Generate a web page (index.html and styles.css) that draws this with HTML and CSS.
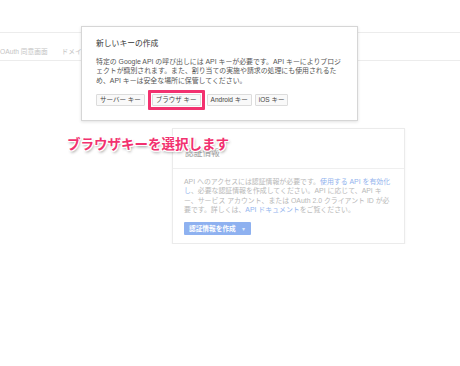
FILE: index.html
```html
<!DOCTYPE html>
<html lang="ja">
<head>
  <meta charset="UTF-8"/>
  <meta name="viewport" content="width=device-width, initial-scale=1"/>
  <title>認証情報</title>
  <link rel="stylesheet" href="styles.css">
</head>
<body>
  <!-- Tabs -->
  <div class="tabs">
    <span class="tab">OAuth 同意画面</span>
    <span class="tab">ドメイン確認</span>
  </div>

  <!-- Credentials card -->
  <div class="card">
    <div class="card-head">認証情報</div>
    <div class="card-body">
      <p>API へのアクセスには認証情報が必要です。<a href="#">使用する API を有効化し</a>、必要な認証情報を作成してください。API に応じて、API キー、サービス アカウント、または OAuth 2.0 クライアント ID が必要です。詳しくは、<a href="#">API ドキュメント</a>をご覧ください。</p>
      <button class="create-btn">認証情報を作成 <span class="caret">▾</span></button>
    </div>
  </div>

  <!-- New key dialog -->
  <div class="dialog">
    <h2>新しいキーの作成</h2>
    <p>特定の Google API の呼び出しには API キーが必要です。API キーによりプロジェクトが識別されます。また、割り当ての実施や請求の処理にも使用されるため、API キーは安全な場所に保管してください。</p>
    <div class="key-btns">
      <button class="key-btn">サーバー キー</button>
      <span class="highlight"><button class="key-btn">ブラウザ キー</button></span>
      <button class="key-btn">Android キー</button>
      <button class="key-btn">iOS キー</button>
    </div>
  </div>

  <div class="note">ブラウザキーを選択します</div>
</body>
</html>
```

FILE: styles.css
```css
body{
  margin: 0;
  font-family: 'Liberation Sans', 'Noto Sans CJK JP', sans-serif;
  background: #fff;
  color: #333;
}
.tabs{
  margin-top: 32px;
  height: 29px;
  box-sizing: border-box;
  border-top: 1px solid #ececec;
  border-bottom: 1px solid #ececec;
  display: flex;
  align-items: center;
  padding-top: 8px;
}
.tab{
  font-size: 6.7px;
  color: #c4c4c4;
  margin-right: 14px;
}
.card{
  margin: 67px 0 0 172px;
  width: 233px;
  border: 1px solid #ebebeb;
  box-shadow: 0 1px 2px rgba(0, 0, 0, 0.06);
  box-sizing: border-box;
}
.card-head{
  font-size: 8.7px;
  line-height: 10px;
  color: #a0a0a0;
  padding: 19px 12px 10px;
  border-bottom: 1px solid #efefef;
}
.card-body{
  padding: 8px 10px 8px 11px;
}
.card-body p{
  margin: 0;
  font-size: 6.9px;
  line-height: 9.4px;
  color: #b8b8b8;
}
.card-body a{
  color: #93b4ee;
  text-decoration: none;
}
.create-btn{
  margin-top: 7px;
  height: 13px;
  width: 67px;
  padding: 0 0 0 5px;
  border: none;
  border-radius: 1px;
  background: #8eb1f0;
  color: #fff;
  font-family: inherit;
  font-size: 6.7px;
  font-weight: bold;
  text-align: left;
  display: flex;
  align-items: center;
}
.caret{
  margin-left: 6px;
  font-size: 6px;
  font-weight: normal;
  color: #dfe9fb;
}
.dialog{
  position: absolute;
  left: 81px;
  top: 26px;
  width: 277px;
  height: 95px;
  box-sizing: border-box;
  background: #fff;
  border: 1px solid #d6d6d6;
  box-shadow: 0 1px 3px rgba(0, 0, 0, 0.12);
  padding: 12px 14px 0 14px;
}
.dialog h2{
  margin: 0;
  font-size: 7.8px;
  line-height: 10px;
  font-weight: normal;
  color: #333;
}
.dialog p{
  margin: 8px 0 0;
  font-size: 6.9px;
  line-height: 9.3px;
  color: #555;
}
.key-btns{
  display: flex;
  align-items: center;
  gap: 3px;
  margin-top: 5px;
}
.key-btns .highlight + .key-btn{
  margin-left: -1px;
}
.key-btn{
  height: 12px;
  padding: 0 3px;
  border: 1px solid #dcdcdc;
  border-radius: 1px;
  background: #f9f9f9;
  color: #444;
  font-family: inherit;
  font-size: 6.5px;
  line-height: 10px;
}
.highlight{
  display: flex;
  padding: 1px;
  border: 3px solid #f2316f;
  border-radius: 1px;
}
.note{
  position: absolute;
  left: 67px;
  top: 135px;
  font-family: 'Noto Sans CJK JP', sans-serif;
  font-size: 13.5px;
  line-height: 16px;
  font-weight: bold;
  color: #f2316f;
  text-shadow: 1px 0 0 #fff, -1px 0 0 #fff, 0 1px 0 #fff, 0 -1px 0 #fff,
    1px 1px 0 #fff, -1px -1px 0 #fff, 1px -1px 0 #fff, -1px 1px 0 #fff,
    1px 2px 3px rgba(0, 0, 0, 0.45);
}
```
